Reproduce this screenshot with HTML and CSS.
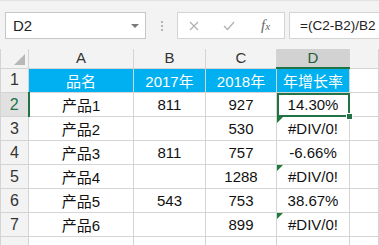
FILE: index.html
```html
<!DOCTYPE html>
<html lang="zh-CN">
<head>
    <meta charset="UTF-8">
    <title>年增长率</title>
    <link rel="stylesheet" href="styles.css">
</head>
<body>
    <div class="formula-bar">
        <div class="name-box">
            <span>D2</span>
            <span class="arrow"></span>
        </div>
        <div class="grip">
            <i></i><i></i><i></i>
        </div>
        <div class="fx-box">
            <svg class="icon" width="10" height="10" viewBox="0 0 10 10">
                <path d="M1 1 L9 9 M9 1 L1 9" stroke="#b0b0b0" stroke-width="1.2" fill="none"/>
            </svg>
            <svg class="icon" width="12" height="10" viewBox="0 0 12 10">
                <path d="M1 5 L4.5 8.5 L11 1" stroke="#b0b0b0" stroke-width="1.2" fill="none"/>
            </svg>
            <span class="fx">f<small>x</small></span>
        </div>
        <div class="formula">=(C2-B2)/B2</div>
    </div>

    <table class="sheet">
        <colgroup>
            <col style="width:28px">
            <col style="width:105px">
            <col style="width:72px">
            <col style="width:71px">
            <col style="width:73px">
            <col>
        </colgroup>
        <tr class="col-heads">
            <th class="corner"><span></span></th>
            <th>A</th>
            <th>B</th>
            <th>C</th>
            <th class="sel">D</th>
            <th></th>
        </tr>
        <tr>
            <th class="row-head">1</th>
            <td class="head">品名</td>
            <td class="head">2017年</td>
            <td class="head">2018年</td>
            <td class="head">年增长率</td>
            <td class="empty"></td>
        </tr>
        <tr>
            <th class="row-head sel">2</th>
            <td class="data">产品1</td>
            <td class="data">811</td>
            <td class="data">927</td>
            <td class="data active">14.30%<span class="handle"></span></td>
            <td class="empty"></td>
        </tr>
        <tr>
            <th class="row-head">3</th>
            <td class="data">产品2</td>
            <td class="data"></td>
            <td class="data">530</td>
            <td class="data err">#DIV/0!</td>
            <td class="empty"></td>
        </tr>
        <tr>
            <th class="row-head">4</th>
            <td class="data">产品3</td>
            <td class="data">811</td>
            <td class="data">757</td>
            <td class="data">-6.66%</td>
            <td class="empty"></td>
        </tr>
        <tr>
            <th class="row-head">5</th>
            <td class="data">产品4</td>
            <td class="data"></td>
            <td class="data">1288</td>
            <td class="data err">#DIV/0!</td>
            <td class="empty"></td>
        </tr>
        <tr>
            <th class="row-head">6</th>
            <td class="data">产品5</td>
            <td class="data">543</td>
            <td class="data">753</td>
            <td class="data">38.67%</td>
            <td class="empty"></td>
        </tr>
        <tr>
            <th class="row-head">7</th>
            <td class="data">产品6</td>
            <td class="data"></td>
            <td class="data">899</td>
            <td class="data err">#DIV/0!</td>
            <td class="empty"></td>
        </tr>
        <tr>
            <th class="row-head"></th>
            <td class="empty"></td>
            <td class="empty"></td>
            <td class="empty"></td>
            <td class="empty"></td>
            <td class="empty"></td>
        </tr>
    </table>
</body>
</html>
```

FILE: styles.css
```css
html, body {
    overflow: hidden;
}
body {
    margin: 0;
    width: 379px;
    height: 245px;
    background-color: #fff;
    font-family: "Liberation Sans", "Noto Sans CJK SC", sans-serif;
}
.formula-bar {
    display: flex;
    align-items: flex-start;
    height: 49px;
    box-sizing: border-box;
    padding: 12px 0 0 5px;
    background-color: #f3f3f3;
    border-top: 1px solid #e2e2e2;
}
.name-box {
    display: flex;
    align-items: center;
    justify-content: space-between;
    width: 141px;
    height: 27px;
    box-sizing: border-box;
    padding: 0 6px 0 7px;
    margin-top: -1px;
    background-color: #fff;
    border: 1px solid #c6c6c6;
    font-size: 15px;
    color: #222;
}
.arrow {
    width: 0;
    height: 0;
    border-left: 4px solid transparent;
    border-right: 4px solid transparent;
    border-top: 4px solid #7a7a7a;
}
.grip {
    display: flex;
    flex-direction: column;
    align-items: center;
    gap: 2px;
    width: 31px;
    padding-top: 8px;
}
.grip i {
    width: 2px;
    height: 2px;
    background-color: #b4b4b4;
}
.fx-box {
    display: flex;
    align-items: center;
    width: 108px;
    height: 27px;
    box-sizing: border-box;
    margin-top: -1px;
    padding-left: 11px;
    background-color: #fff;
    border: 1px solid #d4d4d4;
}
.icon {
    margin-right: 24px;
}
.icon + .icon {
    margin-right: 26px;
}
.fx {
    font-family: "Liberation Serif", serif;
    font-style: italic;
    font-size: 15px;
    color: #666;
}
.fx small {
    font-size: 11px;
}
.formula {
    flex: 1;
    min-width: 0;
    height: 27px;
    box-sizing: border-box;
    margin: -1px 0 0 4px;
    padding: 5px 0 0 10px;
    background-color: #fff;
    border: 1px solid #d4d4d4;
    border-right: none;
    font-size: 13.5px;
    color: #222;
    white-space: nowrap;
    overflow: hidden;
}
.sheet {
    table-layout: fixed;
    width: 379px;
    border-collapse: collapse;
    font-size: 15px;
}
.sheet th, .sheet td {
    padding: 0;
    height: 23px;
    border: 1px solid #d4d4d4;
    text-align: center;
    vertical-align: middle;
    font-weight: normal;
    white-space: nowrap;
}
.col-heads th {
    height: 18px;
    background-color: #f3f3f3;
    border-color: #d4d4d4;
    color: #333;
    font-size: 15px;
    line-height: 18px;
    border-top: none;
}
.col-heads th.sel {
    background-color: #d2d2d2;
    color: #1e5e3a;
    border-bottom: 2px solid #217346;
}
.corner {
    position: relative;
    border-left: none;
}
.corner span {
    position: absolute;
    right: 3px;
    bottom: 3px;
    width: 0;
    height: 0;
    border-left: 11px solid transparent;
    border-bottom: 11px solid #b8b8b8;
}
.row-head {
    background-color: #f3f3f3;
    color: #333;
    font-size: 16px;
    border-left: none;
}
.row-head.sel {
    background-color: #e1e1e1;
    color: #217346;
    border-right: 2px solid #217346;
}
.head {
    background-color: #00b0f0;
    color: #fff;
    border-color: #2f75b5;
}
.data {
    position: relative;
    color: #111;
    border-color: #2f75b5;
}
.empty {
    border-color: #d4d4d4;
}
.active {
    outline: 2px solid #217346;
    outline-offset: -2px;
}
.handle {
    position: absolute;
    right: -4px;
    bottom: -4px;
    width: 5px;
    height: 5px;
    background-color: #217346;
    border: 1px solid #fff;
    z-index: 2;
}
.err::before {
    content: "";
    position: absolute;
    left: 0;
    top: 0;
    width: 0;
    height: 0;
    border-right: 6px solid transparent;
    border-top: 6px solid #1f7a3a;
}
```
